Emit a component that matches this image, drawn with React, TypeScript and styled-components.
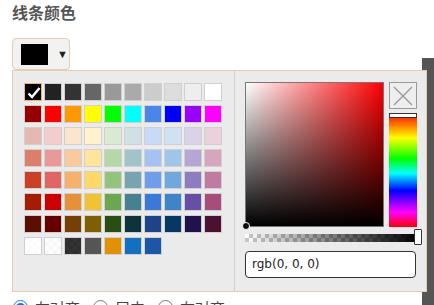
import React, { useState } from 'react'
import styled, { createGlobalStyle } from 'styled-components'

const GlobalStyle = createGlobalStyle`
  body {
    margin: 0;
    background: #ffffff;
    font-family: "Liberation Sans", "Noto Sans CJK SC", sans-serif;
    overflow: hidden;
  }
`

// palette rows, last row holds the recent / custom colours
const paletteRows: string[][] = [
  ['#000000', '#222222', '#333333', '#666666', '#999999', '#aaaaaa', '#cccccc', '#dddddd', '#eeeeee', '#ffffff'],
  ['#980000', '#ff0000', '#ff9900', '#ffff00', '#00ff00', '#00ffff', '#4a86e8', '#0000ff', '#9900ff', '#ff00ff'],
  ['#e6b8af', '#f4cccc', '#fce5cd', '#fff2cc', '#d9ead3', '#d0e0e3', '#c9daf8', '#cfe2f3', '#d9d2e9', '#ead1dc'],
  ['#dd7e6b', '#ea9999', '#f9cb9c', '#ffe599', '#b6d7a8', '#a2c4c9', '#a4c2f4', '#9fc5e8', '#b4a7d6', '#d5a6bd'],
  ['#cc4125', '#e06666', '#f6b26b', '#ffd966', '#93c47d', '#76a5af', '#6d9eeb', '#6fa8dc', '#8e7cc3', '#c27ba0'],
  ['#a61c00', '#cc0000', '#e69138', '#f1c232', '#6aa84f', '#45818e', '#3c78d8', '#3d85c6', '#674ea7', '#a64d79'],
  ['#5b0f00', '#660000', '#783f04', '#7f6000', '#274e13', '#0c343d', '#1c4587', '#073763', '#20124d', '#4c1130'],
  ['rgba(255,255,255,0.85)', 'rgba(255,255,255,0.7)', 'rgba(0,0,0,0.8)', '#555555', '#e39100', '#1170c0', '#1d56a8'],
]

const checker = (a: string, b: string, size: number) => `
  background-color: ${a};
  background-image:
    linear-gradient(45deg, ${b} 25%, transparent 25%, transparent 75%, ${b} 75%),
    linear-gradient(45deg, ${b} 25%, transparent 25%, transparent 75%, ${b} 75%);
  background-size: ${size * 2}px ${size * 2}px;
  background-position: 0 0, ${size}px ${size}px;
`

const Page = styled.div`
  position: relative;
  padding: 4px 8px 0 12px;
`

// dark strip of the surrounding window, sits behind the popup
const EdgeStrip = styled.div`
  position: absolute;
  right: 0;
  top: 58px;
  width: 12px;
  height: 260px;
  background: #555555;
`

const Title = styled.div`
  font-size: 16px;
  line-height: 19px;
  font-weight: bold;
  color: #555555;
`

const Toggle = styled.div`
  margin-top: 15px;
  width: 58px;
  height: 32px;
  box-sizing: border-box;
  border: 1px solid #e8ccae;
  border-radius: 4px;
  background: #f2f2f2;
  display: flex;
  align-items: center;
  padding: 0 0 0 8px;
  gap: 9px;
`

const ToggleSwatch = styled.div`
  width: 27px;
  height: 21px;
  background: #000000;
`

const Arrow = styled.span`
  font-size: 11px;
  color: #222222;
`

const Panel = styled.div`
  position: relative;
  z-index: 1;
  width: 415px;
  height: 222px;
  box-sizing: border-box;
  border: 1px solid #e8ccae;
  background: #ebebeb;
  display: flex;
`

const PaletteSide = styled.div`
  width: 221px;
  padding: 12px 0 0 11px;
  box-sizing: border-box;
`

const Grid = styled.div`
  display: grid;
  grid-template-columns: repeat(10, 18px);
  grid-auto-rows: 18px;
  column-gap: 2px;
  row-gap: 4px;
`

const Swatch = styled.div<{ $color: string; $selected?: boolean }>`
  position: relative;
  box-sizing: border-box;
  border: 1px solid ${({ $selected }) => ($selected ? '#f0b858' : '#d0d0d0')};
  ${checker('#ffffff', '#e4e4e4', 4)}
  &::after {
    content: '';
    position: absolute;
    inset: 0;
    background: ${({ $color }) => $color};
  }
  svg {
    position: absolute;
    inset: 1px;
    z-index: 1;
  }
`

const PickerSide = styled.div`
  flex: 1;
  border-left: 1px solid #cfcfcf;
  padding: 11px 0 0 10px;
  display: flex;
  flex-direction: column;
`

const TopRow = styled.div`
  display: flex;
  gap: 5px;
`

const SatBox = styled.div`
  position: relative;
  width: 139px;
  height: 145px;
  box-sizing: border-box;
  border: 1px solid #777777;
  background:
    linear-gradient(to top, #000000, rgba(0, 0, 0, 0)),
    linear-gradient(to right, #ffffff, #ff0000);
`

const SatHandle = styled.div`
  position: absolute;
  left: -4px;
  bottom: -4px;
  width: 6px;
  height: 6px;
  border-radius: 50%;
  background: #000000;
  border: 1px solid #ffffff;
`

const SideColumn = styled.div`
  display: flex;
  flex-direction: column;
  gap: 4px;
`

const ClearButton = styled.div`
  width: 28px;
  height: 27px;
  box-sizing: border-box;
  border: 1px solid #9a9a9a;
  background: #eeeeee;
  display: flex;
  align-items: center;
  justify-content: center;
`

const HueTrack = styled.div`
  position: relative;
  width: 28px;
  height: 114px;
  background: linear-gradient(
    to bottom,
    #ff0000 0%,
    #ffff00 22%,
    #00ff00 40%,
    #00ffff 53%,
    #0000ff 68%,
    #ff00ff 87%,
    #ff0000 100%
  );
`

const HueHandle = styled.div`
  position: absolute;
  left: 0;
  right: 0;
  top: 0;
  height: 5px;
  box-sizing: border-box;
  border: 1px solid #333333;
  background: #ffffff;
`

const AlphaTrack = styled.div`
  position: relative;
  margin-top: 7px;
  width: 173px;
  height: 8px;
  ${checker('#ffffff', '#c8c8c8', 4)}
  &::after {
    content: '';
    position: absolute;
    inset: 0;
    background: linear-gradient(to right, rgba(0, 0, 0, 0), #000000);
  }
`

const AlphaHandle = styled.div`
  position: absolute;
  right: -4px;
  top: -5px;
  width: 8px;
  height: 16px;
  box-sizing: border-box;
  border: 1px solid #333333;
  border-radius: 1px;
  background: #ffffff;
  z-index: 1;
`

const ValueInput = styled.div`
  margin-top: 9px;
  width: 171px;
  height: 27px;
  box-sizing: border-box;
  border: 1px solid #333333;
  border-radius: 4px;
  background: #ffffff;
  font-family: Verdana, "DejaVu Sans", sans-serif;
  font-size: 12px;
  line-height: 25px;
  padding-left: 6px;
  color: #222222;
`

const AlignRow = styled.div`
  display: flex;
  align-items: center;
  margin-top: 5px;
  font-size: 15px;
  color: #444444;
`

const AlignOption = styled.label`
  display: flex;
  align-items: center;
  margin-right: 12px;
  input {
    width: 15px;
    height: 15px;
    margin: 0 7px 0 1px;
    accent-color: #1a73e8;
  }
`

const Check = () => (
  <svg width="16" height="16" viewBox="0 0 16 16">
    <path d="M2.5 8.5 L6 12 L13.5 3" fill="none" stroke="#ffffff" strokeWidth="2.4" />
  </svg>
)

const ClearIcon = () => (
  <svg width="22" height="22" viewBox="0 0 22 22">
    <path d="M2 2 L20 20 M20 2 L2 20" stroke="#9a9a9a" strokeWidth="1.4" />
  </svg>
)

const App = () => {
  const [align, setAlign] = useState('left')

  return (
    <Page>
      <GlobalStyle />
      <EdgeStrip />
      <Title>线条颜色</Title>
      <Toggle>
        <ToggleSwatch />
        <Arrow>▼</Arrow>
      </Toggle>
      <Panel>
        <PaletteSide>
          <Grid>
            {paletteRows.flatMap((row, r) =>
              row.map((color, c) => (
                <Swatch key={`${r}-${c}`} $color={color} $selected={r === 0 && c === 0}>
                  {r === 0 && c === 0 && <Check />}
                </Swatch>
              ))
            )}
          </Grid>
        </PaletteSide>
        <PickerSide>
          <TopRow>
            <SatBox>
              <SatHandle />
            </SatBox>
            <SideColumn>
              <ClearButton>
                <ClearIcon />
              </ClearButton>
              <HueTrack>
                <HueHandle />
              </HueTrack>
            </SideColumn>
          </TopRow>
          <AlphaTrack>
            <AlphaHandle />
          </AlphaTrack>
          <ValueInput>rgb(0, 0, 0)</ValueInput>
        </PickerSide>
      </Panel>
      <AlignRow>
        {[
          ['left', '左对齐'],
          ['center', '居中'],
          ['right', '右对齐'],
        ].map(([key, label]) => (
          <AlignOption key={key}>
            <input type="radio" name="align" checked={align === key} onChange={() => setAlign(key)} />
            {label}
          </AlignOption>
        ))}
      </AlignRow>
    </Page>
  )
}

export default App
